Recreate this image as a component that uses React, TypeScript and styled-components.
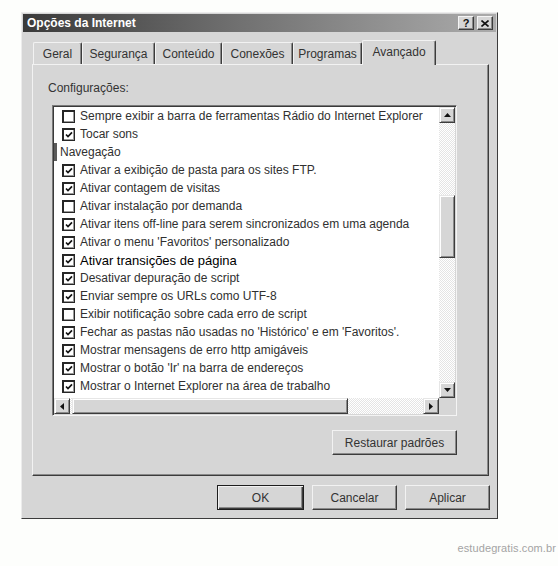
import React from 'react';
import styled, { createGlobalStyle } from 'styled-components';

const GlobalStyle = createGlobalStyle`
    body {
        margin: 0;
        background: #fdfefc;
        font-family: "Liberation Sans", Arial, sans-serif;
    }
`;

const Page = styled.div`
    width: 558px;
    height: 566px;
    box-sizing: border-box;
    padding: 12px 2px 11px 21px;
    display: flex;
    flex-direction: column;
`;

const Dialog = styled.div`
    width: 477px;
    height: 507px;
    box-sizing: border-box;
    background: #d6d6d6;
    border: 1px solid;
    border-color: #ececec #3c3c3c #3c3c3c #ececec;
    padding: 1px;
    display: flex;
    flex-direction: column;
`;

const TitleBar = styled.div`
    height: 18px;
    background: linear-gradient(to right, #3a3a3a 0%, #707070 45%, #ababab 100%);
    display: flex;
    align-items: center;
    padding: 0 3px 0 4px;
    color: #fff;
    font-weight: bold;
    font-size: 12px;
`;

const TitleText = styled.span`
    flex: 1;
`;

const TitleButton = styled.div`
    width: 16px;
    height: 14px;
    box-sizing: border-box;
    background: #d6d6d6;
    border: 1px solid;
    border-color: #f4f4f4 #3c3c3c #3c3c3c #f4f4f4;
    box-shadow: inset -1px -1px 0 #8a8a8a;
    display: flex;
    align-items: center;
    justify-content: center;
    color: #111;
    font-size: 11px;
    font-weight: bold;
    margin-left: 3px;
`;

const Body = styled.div`
    flex: 1;
    display: flex;
    flex-direction: column;
    padding: 0 7px 0 9px;
`;

const TabRow = styled.div`
    margin-top: 8px;
    height: 25px;
    display: flex;
    align-items: flex-start;
    padding-left: 1px;
    position: relative;
    z-index: 1;
`;

const Tab = styled.div<{ w: number; active?: boolean }>`
    width: ${p => p.w}px;
    height: ${p => (p.active ? 25 : 22)}px;
    margin-top: ${p => (p.active ? 0 : 2)}px;
    box-sizing: border-box;
    background: #d6d6d6;
    border-top: 1px solid #f2f2f2;
    border-left: 1px solid #f2f2f2;
    border-right: 1px solid #3c3c3c;
    box-shadow: inset -1px 0 0 #8a8a8a;
    border-radius: 2px 2px 0 0;
    font-size: 12px;
    color: #333;
    display: flex;
    justify-content: center;
    padding-top: 4px;
`;

const Panel = styled.div`
    margin-top: -1px;
    width: 457px;
    height: 412px;
    box-sizing: border-box;
    border: 1px solid;
    border-color: #f2f2f2 #3c3c3c #3c3c3c #f2f2f2;
    box-shadow: inset -1px -1px 0 #8a8a8a;
    padding: 16px 31px 0 15px;
    display: flex;
    flex-direction: column;
`;

const Label = styled.div`
    font-size: 12px;
    line-height: 14px;
    color: #333;
`;

const ListBox = styled.div`
    margin: 10px 0 0 4px;
    width: 405px;
    height: 311px;
    box-sizing: border-box;
    border: 1px solid;
    border-color: #7a7a7a #f4f4f4 #f4f4f4 #7a7a7a;
    box-shadow: inset 1px 1px 0 #3a3a3a, inset -1px -1px 0 #d6d6d6;
    padding: 1px;
    background: #fff;
    display: grid;
    grid-template-columns: 1fr 16px;
    grid-template-rows: 1fr 16px;
`;

const Rows = styled.div`
    overflow: hidden;
`;

const Row = styled.div<{ big?: boolean }>`
    height: 18px;
    display: flex;
    align-items: center;
    padding-left: 8px;
    font-size: ${p => (p.big ? 13 : 12)}px;
    color: ${p => (p.big ? '#000' : '#303030')};
    white-space: nowrap;
`;

const Category = styled.div`
    height: 18px;
    display: flex;
    align-items: center;
    border-left: 3px solid #5a5a5a;
    padding-left: 3px;
    font-size: 12px;
    color: #303030;
`;

const Box = styled.span`
    width: 13px;
    height: 13px;
    flex: none;
    box-sizing: border-box;
    border: 1px solid #262626;
    border-top-width: 2px;
    border-left-width: 2px;
    box-shadow: inset -1px -1px 0 #9a9a9a;
    background: #fff;
    display: flex;
    align-items: center;
    justify-content: center;
    margin-right: 5px;
`;

const VScroll = styled.div`
    display: flex;
    flex-direction: column;
`;

const HScroll = styled.div`
    display: flex;
`;

const Track = styled.div<{ size?: number }>`
    ${p => (p.size !== undefined ? `flex: none; flex-basis: ${p.size}px;` : 'flex: 1;')}
    background: repeating-conic-gradient(#e4e4e4 0% 25%, #ffffff 0% 50%) 0 0 / 2px 2px;
`;

const Raised = styled.div<{ size?: number }>`
    ${p => (p.size !== undefined ? `flex: none; flex-basis: ${p.size}px;` : '')}
    min-width: 16px;
    min-height: 16px;
    box-sizing: border-box;
    background: #d6d6d6;
    border: 1px solid;
    border-color: #e6e6e6 #3c3c3c #3c3c3c #e6e6e6;
    box-shadow: inset 1px 1px 0 #fff, inset -1px -1px 0 #8a8a8a;
    display: flex;
    align-items: center;
    justify-content: center;
`;

const Corner = styled.div`
    background: #d6d6d6;
`;

const RestoreRow = styled.div`
    margin-top: 14px;
    display: flex;
    justify-content: flex-end;
`;

const Button = styled.div<{ w: number; primary?: boolean }>`
    width: ${p => p.w}px;
    height: 25px;
    box-sizing: border-box;
    background: #d6d6d6;
    border: 1px solid;
    border-color: ${p => (p.primary ? '#1e1e1e' : '#f2f2f2 #3c3c3c #3c3c3c #f2f2f2')};
    box-shadow: ${p =>
        p.primary
            ? 'inset 1px 1px 0 #f2f2f2, inset -1px -1px 0 #3c3c3c, inset -2px -2px 0 #8a8a8a'
            : 'inset -1px -1px 0 #8a8a8a'};
    display: flex;
    align-items: center;
    justify-content: center;
    font-size: 12px;
    color: #333;
`;

const Footer = styled.div`
    margin-top: 9px;
    display: flex;
    justify-content: flex-end;
    gap: 8px;
    margin-right: -1px;
`;

const Watermark = styled.div`
    margin-top: auto;
    align-self: flex-end;
    font-size: 11px;
    line-height: 14px;
    letter-spacing: 0.1px;
    color: #a4a4a4;
`;

const Check = () => (
    <svg width="8" height="8" viewBox="0 0 8 8">
        <path d="M1 3.5 L3 5.6 L7 1.3" fill="none" stroke="#111" strokeWidth="1.7" />
    </svg>
);

const Arrow = ({ dir }: { dir: 'up' | 'down' | 'left' | 'right' }) => {
    const pts = {
        up: '0,4 7,4 3.5,0',
        down: '0,0 7,0 3.5,4',
        left: '4,0 4,7 0,3.5',
        right: '0,0 0,7 4,3.5',
    }[dir];
    const vertical = dir === 'up' || dir === 'down';
    return (
        <svg width={vertical ? 7 : 4} height={vertical ? 4 : 7}>
            <polygon points={pts} fill="#111" />
        </svg>
    );
};

type Item = { text: string; checked?: boolean; category?: boolean; big?: boolean };

const items: Item[] = [
    { text: 'Sempre exibir a barra de ferramentas Rádio do Internet Explorer' },
    { text: 'Tocar sons', checked: true },
    { text: 'Navegação', category: true },
    { text: 'Ativar a exibição de pasta para os sites FTP.', checked: true },
    { text: 'Ativar contagem de visitas', checked: true },
    { text: 'Ativar instalação por demanda' },
    { text: 'Ativar itens off-line para serem sincronizados em uma agenda', checked: true },
    { text: "Ativar o menu 'Favoritos' personalizado", checked: true },
    { text: 'Ativar transições de página', checked: true, big: true },
    { text: 'Desativar depuração de script', checked: true },
    { text: 'Enviar sempre os URLs como UTF-8', checked: true },
    { text: 'Exibir notificação sobre cada erro de script' },
    { text: "Fechar as pastas não usadas no 'Histórico' e em 'Favoritos'.", checked: true },
    { text: 'Mostrar mensagens de erro http amigáveis', checked: true },
    { text: "Mostrar o botão 'Ir' na barra de endereços", checked: true },
    { text: 'Mostrar o Internet Explorer na área de trabalho', checked: true },
];

const tabs = [
    { label: 'Geral', w: 49 },
    { label: 'Segurança', w: 73 },
    { label: 'Conteúdo', w: 67 },
    { label: 'Conexões', w: 71 },
    { label: 'Programas', w: 69 },
    { label: 'Avançado', w: 74, active: true },
];

export default function App() {
    return (
        <Page>
            <GlobalStyle />
            <Dialog>
                <TitleBar>
                    <TitleText>Opções da Internet</TitleText>
                    <TitleButton>?</TitleButton>
                    <TitleButton>
                        <svg width="8" height="7" viewBox="0 0 8 7">
                            <path d="M0.5 0.5 L7.5 6.5 M7.5 0.5 L0.5 6.5" stroke="#111" strokeWidth="1.6" />
                        </svg>
                    </TitleButton>
                </TitleBar>
                <Body>
                    <TabRow>
                        {tabs.map(t => (
                            <Tab key={t.label} w={t.w} active={t.active}>
                                {t.label}
                            </Tab>
                        ))}
                    </TabRow>
                    <Panel>
                        <Label>Configurações:</Label>
                        <ListBox>
                            <Rows>
                                {items.map(item =>
                                    item.category ? (
                                        <Category key={item.text}>{item.text}</Category>
                                    ) : (
                                        <Row key={item.text} big={item.big}>
                                            <Box>{item.checked && <Check />}</Box>
                                            {item.text}
                                        </Row>
                                    )
                                )}
                            </Rows>
                            <VScroll>
                                <Raised><Arrow dir="up" /></Raised>
                                <Track size={72} />
                                <Raised size={63} />
                                <Track />
                                <Raised><Arrow dir="down" /></Raised>
                            </VScroll>
                            <HScroll>
                                <Raised><Arrow dir="left" /></Raised>
                                <Track size={2} />
                                <Raised size={276} />
                                <Track />
                                <Raised><Arrow dir="right" /></Raised>
                            </HScroll>
                            <Corner />
                        </ListBox>
                        <RestoreRow>
                            <Button w={125}>Restaurar padrões</Button>
                        </RestoreRow>
                    </Panel>
                    <Footer>
                        <Button w={87} primary>OK</Button>
                        <Button w={85}>Cancelar</Button>
                        <Button w={85}>Aplicar</Button>
                    </Footer>
                </Body>
            </Dialog>
            <Watermark>estudegratis.com.br</Watermark>
        </Page>
    );
}
